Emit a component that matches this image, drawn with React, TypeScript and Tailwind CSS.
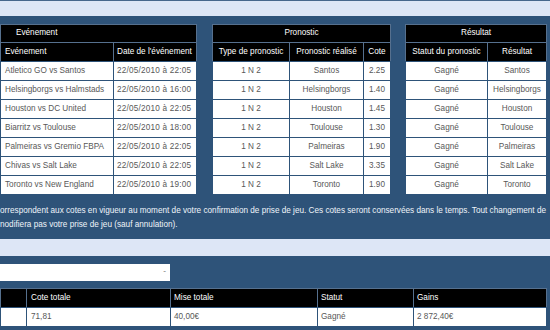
import React from "react";

const font = { fontFamily: '"Liberation Sans", Arial, sans-serif' };

const matches = [
  { event: "Atletico GO vs Santos", date: "22/05/2010 à 22:05", prono: "Santos", cote: "2.25" },
  { event: "Helsingborgs vs Halmstads", date: "22/05/2010 à 16:00", prono: "Helsingborgs", cote: "1.40" },
  { event: "Houston vs DC United", date: "22/05/2010 à 22:05", prono: "Houston", cote: "1.45" },
  { event: "Biarritz vs Toulouse", date: "22/05/2010 à 18:00", prono: "Toulouse", cote: "1.30" },
  { event: "Palmeiras vs Gremio FBPA", date: "22/05/2010 à 22:05", prono: "Palmeiras", cote: "1.90" },
  { event: "Chivas vs Salt Lake", date: "22/05/2010 à 22:05", prono: "Salt Lake", cote: "3.35" },
  { event: "Toronto vs New England", date: "22/05/2010 à 19:00", prono: "Toronto", cote: "1.90" },
];

const head = "bg-black text-white flex items-center whitespace-nowrap";
const cell = "bg-white text-[#585858] flex items-center h-[18px] whitespace-nowrap outline outline-[#2e5379]";

export default function App() {
  return (
    <div className="w-[550px] h-[330px] overflow-hidden bg-[#2e5379] text-[8.2px] leading-none" style={font}>
      <div className="h-px bg-[#46678c]" />
      <div className="h-[15px] bg-[#dde6f6]" />

      <div className="flex gap-[15px] pt-[8px]">
        {/* Evénement */}
        <div className="grid grid-cols-[112px_82px] gap-px p-px bg-[#56708e]">
          <div className={`${head} col-span-2 h-[17px] pl-[15px]`}>Evénement</div>
          <div className={`${head} h-[18px] pl-[4px]`}>Evénement</div>
          <div className={`${head} h-[18px] pl-[3px]`}>Date de l'événement</div>
          {matches.map((m) => (
            <React.Fragment key={m.event}>
              <div className={`${cell} pl-[4px]`}>{m.event}</div>
              <div className={`${cell} pl-[3px] tracking-[0.2px]`}>{m.date}</div>
            </React.Fragment>
          ))}
        </div>

        {/* Pronostic */}
        <div className="grid grid-cols-[76px_73px_26px] gap-px p-px bg-[#56708e]">
          <div className={`${head} col-span-3 h-[17px] justify-center`}>Pronostic</div>
          <div className={`${head} h-[18px] justify-center`}>Type de pronostic</div>
          <div className={`${head} h-[18px] justify-center`}>Pronostic réalisé</div>
          <div className={`${head} h-[18px] justify-center`}>Cote</div>
          {matches.map((m) => (
            <React.Fragment key={m.event}>
              <div className={`${cell} justify-center`}>1 N 2</div>
              <div className={`${cell} justify-center`}>{m.prono}</div>
              <div className={`${cell} justify-center`}>{m.cote}</div>
            </React.Fragment>
          ))}
        </div>

        {/* Résultat */}
        <div className="grid grid-cols-[81px_58px] gap-px p-px bg-[#56708e] -ml-px">
          <div className={`${head} col-span-2 h-[17px] justify-center`}>Résultat</div>
          <div className={`${head} h-[18px] justify-center`}>Statut du pronostic</div>
          <div className={`${head} h-[18px] justify-center`}>Résultat</div>
          {matches.map((m) => (
            <React.Fragment key={m.event}>
              <div className={`${cell} justify-center`}>Gagné</div>
              <div className={`${cell} justify-center`}>{m.prono}</div>
            </React.Fragment>
          ))}
        </div>
      </div>

      <p className="mt-[9px] text-[#eef3f9] leading-[14px] whitespace-nowrap">
        orrespondent aux cotes en vigueur au moment de votre confirmation de prise de jeu. Ces cotes seront conservées dans le temps. Tout changement de
        <br />
        nodifiera pas votre prise de jeu (sauf annulation).
      </p>

      <div className="mt-[7px] h-[17px] bg-[#dde6f6]" />

      <div className="mt-[8px] w-[170px] h-[17px] bg-white flex items-center justify-end pr-[4px] text-[#888]">-</div>

      <div className="mt-[7px] w-[547px] grid grid-cols-[25px_143px_146px_95px_132px] gap-px p-px bg-[#56708e]">
        <div className={`${head} h-[18px]`} />
        <div className={`${head} h-[18px] pl-[4px]`}>Cote totale</div>
        <div className={`${head} h-[18px] pl-[3px]`}>Mise totale</div>
        <div className={`${head} h-[18px] pl-[3px]`}>Statut</div>
        <div className={`${head} h-[18px] pl-[3px]`}>Gains</div>
        <div className={`${cell} h-[17px]`} />
        <div className={`${cell} h-[17px] pl-[4px]`}>71,81</div>
        <div className={`${cell} h-[17px] pl-[3px]`}>40,00€</div>
        <div className={`${cell} h-[17px] pl-[3px]`}>Gagné</div>
        <div className={`${cell} h-[17px] pl-[3px]`}>2 872,40€</div>
      </div>
    </div>
  );
}
